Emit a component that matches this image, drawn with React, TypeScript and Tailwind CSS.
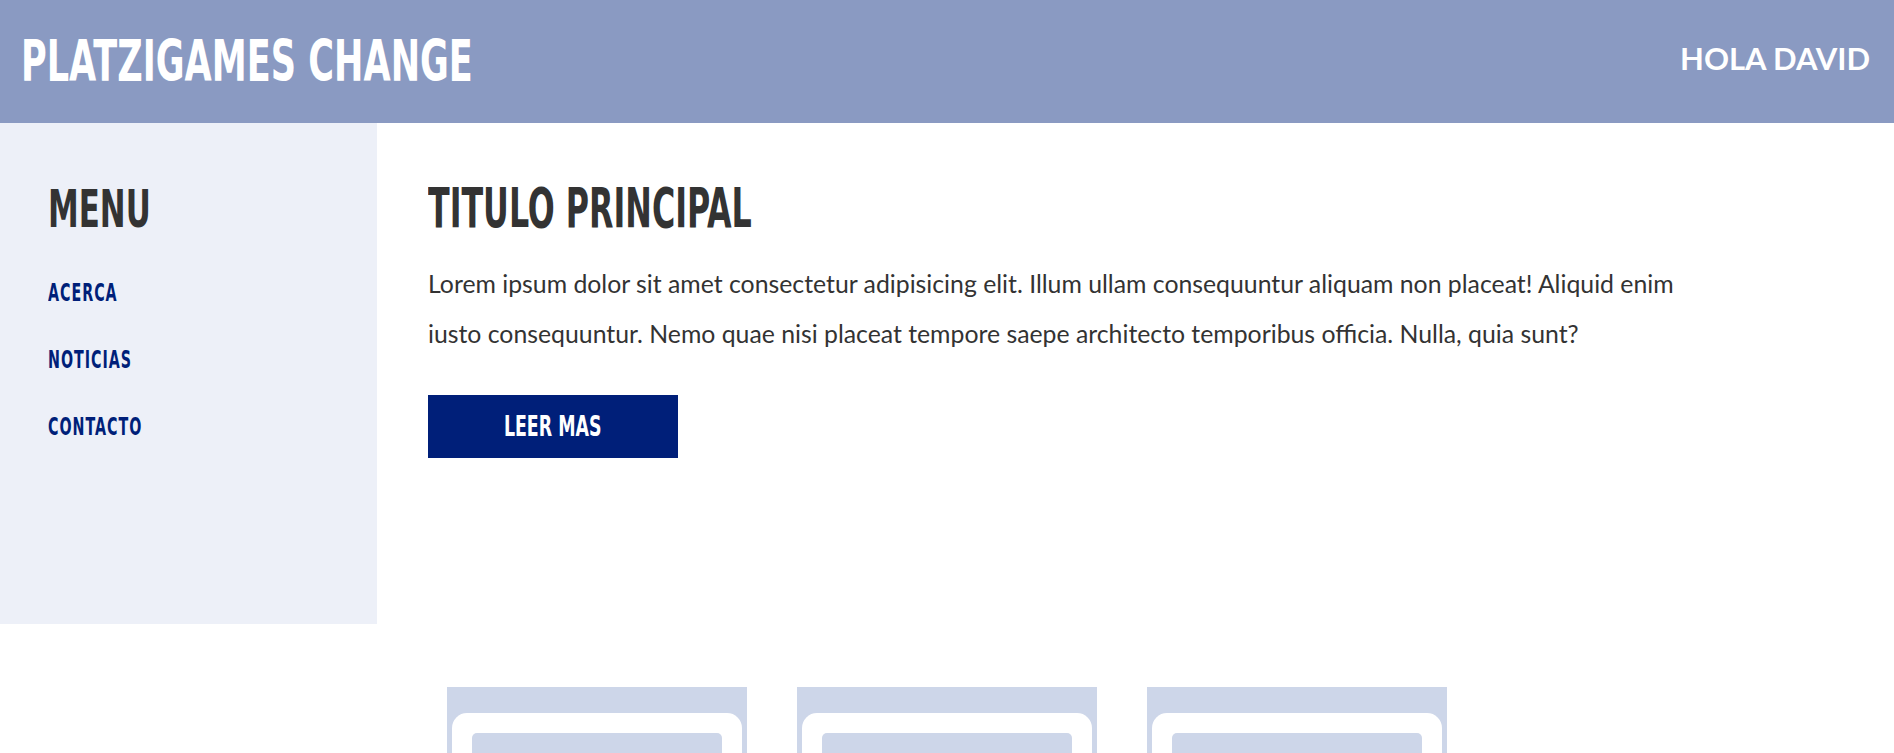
import React from 'react';

const display = "font-['DejaVu_Sans_Condensed','Liberation_Sans',sans-serif] font-bold";

function Card() {
  return (
    <div className="w-[300px] h-[360px] bg-[#cdd6e9] pt-[26px] px-[5px]">
      <div className="h-full bg-white rounded-t-[15px] pt-[20px] px-[20px]">
        <div className="h-[200px] bg-[#cdd6e9] rounded-[5px]" />
      </div>
    </div>
  );
}

export default function App() {
  const links = ['ACERCA', 'NOTICIAS', 'CONTACTO'];

  return (
    <div className="min-h-screen bg-white font-['Lato',sans-serif] text-[#333333]">
      <header className="h-[123px] bg-[#8a9ac2] flex items-center justify-between pl-[21px] pr-[24px]">
        <h1 className={`${display} text-white text-[57px] leading-none inline-block origin-left scale-x-[0.685]`}>
          PLATZIGAMES CHANGE
        </h1>
        <span className="font-['Lato',sans-serif] font-bold text-white text-[31px] leading-none -mt-[6px]">
          HOLA DAVID
        </span>
      </header>

      <div className="flex">
        <aside className="w-[377px] h-[501px] bg-[#edf0f8] pl-[48px] pt-[60px] shrink-0">
          <h2 className={`${display} text-[#333333] text-[52px] leading-none origin-left scale-x-[0.66]`}>MENU</h2>
          <nav className="mt-[46px] flex flex-col gap-[43px]">
            {links.map((l) => (
              <a
                key={l}
                href="#"
                className={`${display} text-[#001f79] text-[24px] leading-none tracking-[1.5px] origin-left scale-x-[0.66]`}
              >
                {l}
              </a>
            ))}
          </nav>
        </aside>

        <main className="flex-1 pl-[51px] pt-[57px]">
          <h2 className={`${display} text-[#333333] text-[56px] leading-none origin-left scale-x-[0.63]`}>
            TITULO PRINCIPAL
          </h2>
          <p className="mt-[23px] max-w-[1265px] text-[24.8px] leading-[50px] text-[#333333]">
            Lorem ipsum dolor sit amet consectetur adipisicing elit. Illum ullam consequuntur aliquam non placeat! Aliquid enim
            iusto consequuntur. Nemo quae nisi placeat tempore saepe architecto temporibus officia. Nulla, quia sunt?
          </p>
          <button className="mt-[36px] w-[250px] h-[63px] bg-[#001f79] flex items-center justify-center">
            <span className={`${display} text-white text-[28px] leading-none inline-block scale-x-[0.69]`}>LEER MAS</span>
          </button>
        </main>
      </div>

      <section className="mt-[63px] flex justify-center gap-[50px]">
        <Card />
        <Card />
        <Card />
      </section>
    </div>
  );
}
